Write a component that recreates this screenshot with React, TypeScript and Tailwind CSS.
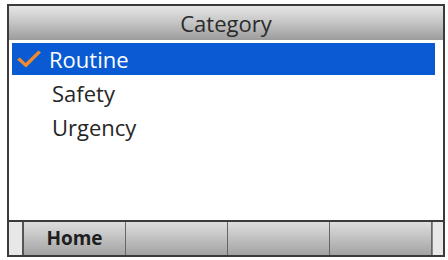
import React from 'react';

const items = ['Routine', 'Safety', 'Urgency'];

const CheckMark = () => (
  <svg width="26" height="20" viewBox="0 0 26 20" className="shrink-0">
    <path d="M1 10.5 L4 8.5 L9.5 14 L22.5 1.5 L25 3.5 L10 18.5 Z" fill="#f08a2c" />
  </svg>
);

export default function App() {
  return (
    <div className="w-[448px] h-[260px] bg-white pt-[4px] pl-[7px] font-['Open_Sans',sans-serif]">
      <div className="w-[438px] h-[253px] border-2 border-[#3b3b3b] flex flex-col bg-white">
        {/* Header */}
        <div className="h-[34px] shrink-0 flex items-center justify-center bg-gradient-to-b from-[#e6e6e6] via-[#c4c4c4] to-[#9c9c9c]">
          <span className="text-[22px] leading-none text-[#2a2a2a]">Category</span>
        </div>

        {/* List */}
        <div className="flex-1 flex flex-col pt-[2px] pl-[3px] pr-[8px]">
          {items.map((item, i) => (
            <div key={item} className="h-[34px] py-[1px] shrink-0">
              {i === 0 ? (
                <div className="h-full bg-[#0a5bd3] flex items-center pl-[4px] gap-[7px]">
                  <CheckMark />
                  <span className="text-[22px] leading-none text-white">{item}</span>
                </div>
              ) : (
                <div className="h-full flex items-center pl-[40px]">
                  <span className="text-[22px] leading-none text-[#262626]">{item}</span>
                </div>
              )}
            </div>
          ))}
        </div>

        {/* Soft keys */}
        <div className="h-[35px] shrink-0 border-t-2 border-[#3b3b3b] flex">
          <div className="w-[15px] bg-[#e8e8e8] border-r-2 border-[#555]" />
          {['Home', '', '', ''].map((label, i) => (
            <div
              key={i}
              className="w-[102px] flex items-center justify-center bg-gradient-to-b from-[#dedede] to-[#a3a3a3] border-r border-[#666]"
            >
              <span className="text-[19px] font-bold leading-none text-[#1e1e1e]">{label}</span>
            </div>
          ))}
          <div className="flex-1 bg-[#e8e8e8] border-l border-[#888]" />
        </div>
      </div>
    </div>
  );
}
